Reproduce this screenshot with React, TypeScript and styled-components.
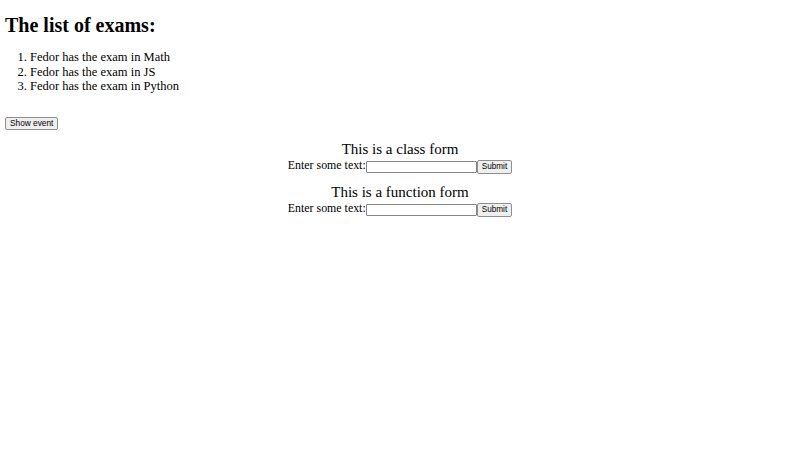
import React, { useState } from "react";
import styled, { createGlobalStyle } from "styled-components";

const GlobalStyle = createGlobalStyle`
  html, body {
    margin: 0;
    padding: 0;
    background: #ffffff;
  }
  body {
    font-family: "Liberation Serif", "Times New Roman", serif;
    font-size: 12.5px;
    color: #000000;
  }
`;

const exams = ["Math", "JS", "Python"];

const Page = styled.div`
  padding: 13.5px 5px 0;
`;

const Title = styled.h1`
  margin: 0 0 13.8px;
  font-size: 20px;
  font-weight: bold;
  line-height: 23px;
`;

const ExamList = styled.ol`
  margin: 0;
  padding-left: 25px;
  line-height: 14.4px;
`;

const ExamItem = styled.li``;

const EventRow = styled.div`
  margin-top: 23.5px;
  display: flex;
`;

const NativeButton = styled.button<{ $size: number; $pad: number; $h: number }>`
  box-sizing: border-box;
  margin: 0;
  padding: 0 ${(p) => p.$pad}px;
  height: ${(p) => p.$h}px;
  font-family: "Liberation Sans", Arial, sans-serif;
  font-size: ${(p) => p.$size}px;
  line-height: 1;
  color: #000000;
  background: #efefef;
  border: 1px solid #8f8f8f;
  border-radius: 2px;
  cursor: pointer;
`;

const FormBlock = styled.form<{ $first?: boolean }>`
  margin-top: ${(p) => (p.$first ? "11.5px" : "9px")};
  text-align: center;
`;

const FormTitle = styled.div`
  font-size: 15px;
  line-height: 17.25px;
`;

const FormRow = styled.div`
  display: flex;
  justify-content: center;
  align-items: center;
  height: 17px;
`;

const Label = styled.label`
  font-size: 11.9px;
  line-height: 14.4px;
  padding-bottom: 3px;
`;

const TextInput = styled.input`
  box-sizing: border-box;
  width: 111px;
  height: 12.5px;
  margin: 0;
  padding: 0 2px;
  font-size: 9px;
  border: 1px solid #858585;
  border-radius: 1px;
  background: #ffffff;
`;

type FormProps = { title: string; first?: boolean };

const TextForm = ({ title, first }: FormProps) => {
  const [value, setValue] = useState("");
  return (
    <FormBlock $first={first} onSubmit={(e) => e.preventDefault()}>
      <FormTitle>{title}</FormTitle>
      <FormRow>
        <Label>Enter some text:</Label>
        <TextInput value={value} onChange={(e) => setValue(e.target.value)} />
        <NativeButton $size={8.2} $pad={4} $h={13.5} type="submit">
          Submit
        </NativeButton>
      </FormRow>
    </FormBlock>
  );
};

export default function App() {
  return (
    <>
      <GlobalStyle />
      <Page>
        <Title>The list of exams:</Title>
        <ExamList>
          {exams.map((exam) => (
            <ExamItem key={exam}>Fedor has the exam in {exam}</ExamItem>
          ))}
        </ExamList>
        <EventRow>
          <NativeButton $size={8.3} $pad={4} $h={12.5} onClick={(e) => console.log(e)}>
            Show event
          </NativeButton>
        </EventRow>
        <TextForm title="This is a class form" first />
        <TextForm title="This is a function form" />
      </Page>
    </>
  );
}
